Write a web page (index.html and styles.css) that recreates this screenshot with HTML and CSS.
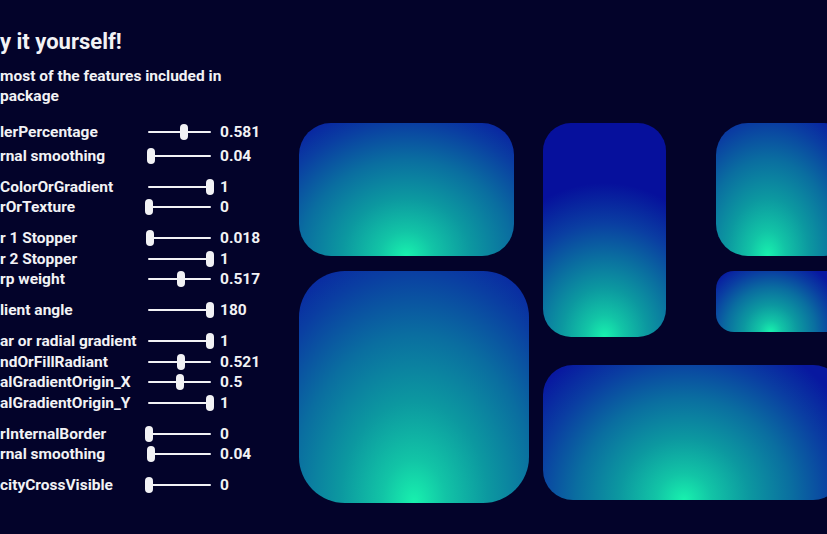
FILE: index.html
```html
<!DOCTYPE html>
<html>
<head>
<meta charset="utf-8">
<link rel="stylesheet" href="styles.css">
</head>
<body>
<div class="page">
  <section class="panel">
    <h1 class="title">y it yourself!</h1>
    <p class="subtitle">most of the features included in<br>package</p>
    <div class="controls">
      <div class="group first">
        <div class="row"><span class="label">lerPercentage</span><span class="slider"><span class="thumb" style="--v:0.581"></span></span><span class="value">0.581</span></div>
        <div class="row"><span class="label">rnal smoothing</span><span class="slider"><span class="thumb" style="--v:0.04"></span></span><span class="value">0.04</span></div>
      </div>
      <div class="group">
        <div class="row"><span class="label">ColorOrGradient</span><span class="slider"><span class="thumb" style="--v:1"></span></span><span class="value">1</span></div>
        <div class="row"><span class="label">rOrTexture</span><span class="slider"><span class="thumb" style="--v:0"></span></span><span class="value">0</span></div>
      </div>
      <div class="group">
        <div class="row"><span class="label">r 1 Stopper</span><span class="slider"><span class="thumb" style="--v:0.018"></span></span><span class="value">0.018</span></div>
        <div class="row"><span class="label">r 2 Stopper</span><span class="slider"><span class="thumb" style="--v:1"></span></span><span class="value">1</span></div>
        <div class="row"><span class="label">rp weight</span><span class="slider"><span class="thumb" style="--v:0.517"></span></span><span class="value">0.517</span></div>
      </div>
      <div class="group">
        <div class="row"><span class="label">lient angle</span><span class="slider"><span class="thumb" style="--v:1"></span></span><span class="value">180</span></div>
      </div>
      <div class="group">
        <div class="row"><span class="label">ar or radial gradient</span><span class="slider"><span class="thumb" style="--v:1"></span></span><span class="value">1</span></div>
        <div class="row"><span class="label">ndOrFillRadiant</span><span class="slider"><span class="thumb" style="--v:0.521"></span></span><span class="value">0.521</span></div>
        <div class="row"><span class="label">alGradientOrigin_X</span><span class="slider"><span class="thumb" style="--v:0.5"></span></span><span class="value">0.5</span></div>
        <div class="row"><span class="label">alGradientOrigin_Y</span><span class="slider"><span class="thumb" style="--v:1"></span></span><span class="value">1</span></div>
      </div>
      <div class="group">
        <div class="row"><span class="label">rInternalBorder</span><span class="slider"><span class="thumb" style="--v:0"></span></span><span class="value">0</span></div>
        <div class="row"><span class="label">rnal smoothing</span><span class="slider"><span class="thumb" style="--v:0.04"></span></span><span class="value">0.04</span></div>
      </div>
      <div class="group">
        <div class="row"><span class="label">cityCrossVisible</span><span class="slider"><span class="thumb" style="--v:0"></span></span><span class="value">0</span></div>
      </div>
    </div>
  </section>
  <section class="canvas">
    <div class="shape s1"></div>
    <div class="shape s2"></div>
    <div class="shape s3"></div>
    <div class="shape s4"></div>
    <div class="shape s5"></div>
    <div class="shape s6"></div>
  </section>
</div>
</body>
</html>
```

FILE: styles.css
```css
html, body {
  margin: 0;
  padding: 0;
  background: #03032a;
  overflow: hidden;
}
.page {
  width: 827px;
  height: 534px;
  display: flex;
  position: relative;
  overflow: hidden;
  font-family: Roboto, "Liberation Sans", sans-serif;
  color: #f2f2f5;
}
.panel {
  width: 290px;
  flex: none;
  padding-top: 28px;
}
.title {
  margin: 0;
  font-size: 22px;
  font-weight: 700;
  line-height: 28px;
}
.subtitle {
  margin: 10px 0 0;
  font-size: 15.5px;
  font-weight: 700;
  line-height: 20px;
}
.controls {
  margin-top: 16px;
  display: flex;
  flex-direction: column;
  gap: 10px;
}
.group {
  display: flex;
  flex-direction: column;
}
.group.first {
  gap: 3px;
}
.row {
  display: grid;
  grid-template-columns: 148px 63px auto;
  align-items: center;
  height: 20.7px;
  font-size: 15.5px;
  font-weight: 700;
  white-space: nowrap;
}
.label {
  overflow: hidden;
}
.slider {
  position: relative;
  height: 2px;
  background: #f2f2f5;
  border-radius: 1px;
}
.value {
  padding-left: 9px;
}
.thumb {
  position: absolute;
  top: -7px;
  left: calc(1px + var(--v) * 61px - 4px);
  width: 8px;
  height: 16px;
  border-radius: 4px;
  background: #f2f2f5;
}
.canvas {
  flex: 1;
  position: relative;
}
.shape {
  position: absolute;
}
.s1 {
  left: 9px; top: 123px; width: 215px; height: 133px;
  border-radius: 32px;
  background: radial-gradient(ellipse 85% 125% at 50% 100%, #18f2ae 0%, #12c4a6 15%, #0c98a0 35%, #0a6ea0 58%, #0a3ea2 80%, #0818a0 100%);
}
.s2 {
  left: 253px; top: 123px; width: 123px; height: 214px;
  border-radius: 28px;
  background: radial-gradient(ellipse 110% 72% at 50% 100%, #18f2ae 0%, #12c4a6 14%, #0c98a0 32%, #0a6ea0 52%, #0a3ea2 74%, #06109c 100%);
}
.s3 {
  left: 426px; top: 123px; width: 140px; height: 133px;
  border-radius: 32px;
  background: radial-gradient(ellipse 85% 125% at 37% 100%, #18f2ae 0%, #12c4a6 15%, #0c98a0 35%, #0a6ea0 58%, #0a3ea2 80%, #0818a0 100%);
}
.s4 {
  left: 9px; top: 271px; width: 230px; height: 232px;
  border-radius: 46px;
  background: radial-gradient(ellipse 92% 125% at 50% 100%, #18f2ae 0%, #12c4a6 15%, #0c98a0 35%, #0a6ea0 58%, #0a3ea2 80%, #0818a0 100%);
}
.s5 {
  left: 426px; top: 271px; width: 140px; height: 61px;
  border-radius: 18px;
  background: radial-gradient(ellipse 55% 125% at 39% 100%, #18f2ae 0%, #12c4a6 15%, #0c98a0 35%, #0a6ea0 58%, #0a3ea2 80%, #0818a0 100%);
}
.s6 {
  left: 253px; top: 365px; width: 300px; height: 135px;
  border-radius: 30px;
  background: radial-gradient(ellipse 62% 130% at 47% 100%, #18f2ae 0%, #12c4a6 15%, #0c98a0 35%, #0a6ea0 58%, #0a3ea2 80%, #0818a0 100%);
}
```
